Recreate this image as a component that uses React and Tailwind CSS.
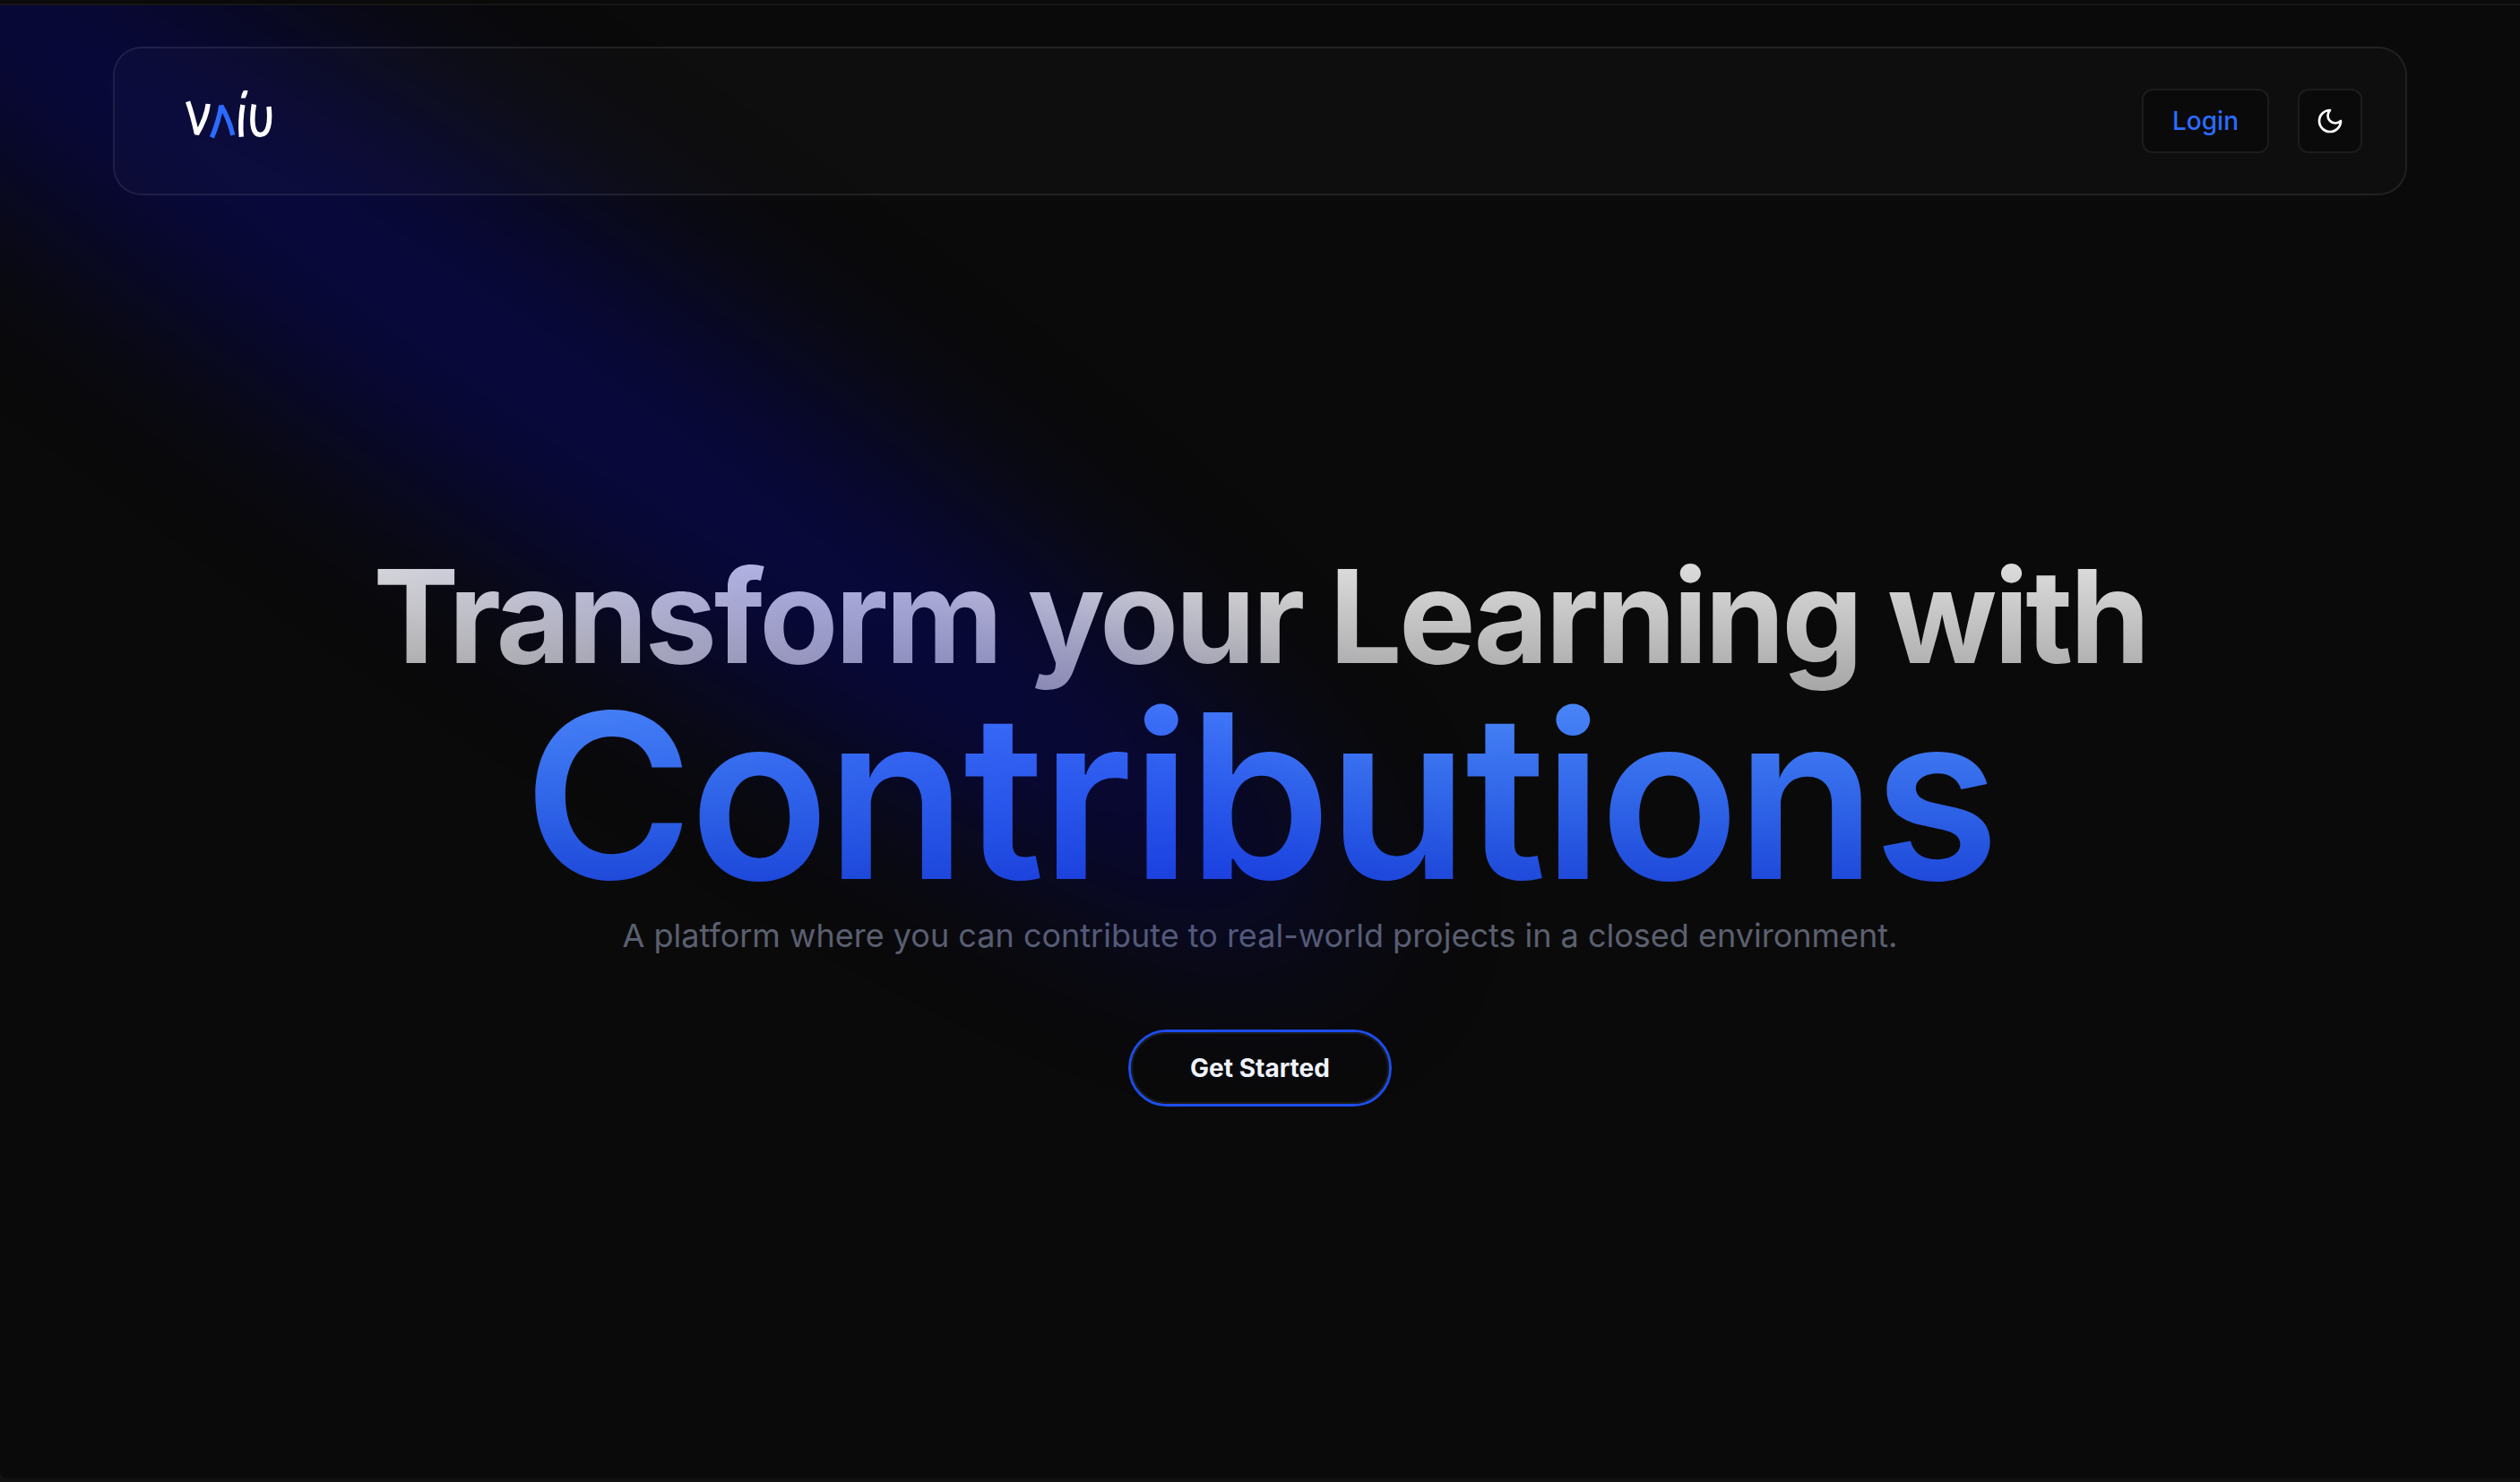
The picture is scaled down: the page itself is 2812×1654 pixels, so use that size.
function Logo() {
  return (
    <svg viewBox="0 0 98 55" className="h-[55px] w-[98px]" fill="none" strokeWidth="5.4" role="img" aria-label="vaiu">
      <path d="M3.6 13.4C8.2 26 11 38 13.6 49.6C20 39 24.8 28 26.2 16" stroke="#fff" strokeLinejoin="bevel" />
      <path d="M30.4 53.4C35.4 42 39 29 40.8 18C46.6 28 51.2 39 53.8 50.8" stroke="#2c6bff" strokeLinejoin="bevel" />
      <path d="M64.9 17C62.8 29 62.2 40 63.3 52.8" stroke="#fff" />
      <path d="M65.5 1.5Q68 0.4 70.6 1.2Q70 5 67.8 9.6H62.8Q63.4 5 65.5 1.5Z" fill="#fff" stroke="none" />
      <path d="M77.4 16.5C74.5 34 75 50.2 84.2 50.4C93.5 50.6 96 37 94 19" stroke="#fff" />
    </svg>
  );
}

function Spotlight() {
  return (
    <svg
      className="pointer-events-none absolute -left-[564px] -top-[454px] z-10 h-[1684px] w-[2244px]"
      viewBox="0 0 3787 2842"
      fill="none"
      aria-hidden="true"
    >
      <defs>
        <filter id="beam-blur" x="0" y="0" width="3787" height="2842" filterUnits="userSpaceOnUse" colorInterpolationFilters="sRGB">
          <feGaussianBlur stdDeviation="165" />
        </filter>
      </defs>
      <g filter="url(#beam-blur)">
        <ellipse
          cx="1924.71"
          cy="273.501"
          rx="1924.71"
          ry="290"
          transform="matrix(-0.822377 -0.568943 -0.568943 0.822377 3631.88 2291.09)"
          fill="blue"
          fillOpacity="0.21"
        />
      </g>
    </svg>
  );
}

function MoonIcon() {
  return (
    <svg
      viewBox="0 0 24 24"
      className="size-8"
      fill="none"
      stroke="#fff"
      strokeWidth="2"
      strokeLinecap="round"
      strokeLinejoin="round"
      aria-hidden="true"
    >
      <path d="M12 3a6 6 0 0 0 9 9 9 9 0 1 1-9-9Z" />
    </svg>
  );
}

export default function App() {
  return (
    <div className="flex min-h-screen flex-col bg-[#121212] pb-1 font-['Inter',sans-serif] text-white">
      <div className="h-1 bg-[#0a0a0a]" />
      <div className="relative flex flex-1 flex-col overflow-hidden rounded-bl-lg border-t-2 border-white/5 bg-[#0a0a0a]">
        <Spotlight />
        <header className="relative z-20 px-8 pt-[46px]">
          <nav className="mx-auto flex max-w-[2560px] items-center justify-between rounded-4xl border-2 border-white/8 bg-white/2 py-[45px] pl-[78px] pr-12 shadow-[0_16px_48px_rgba(255,255,255,0.01)]">
            <a href="#home" className="-mt-4">
              <Logo />
            </a>
            <div className="flex items-center gap-8">
              <button type="button" className="h-[72px] rounded-xl border-2 border-[#1c1c1c] bg-[#0a0a0a] px-8 text-[28px] leading-10 font-medium text-[#2c6bff]">
                Login
              </button>
              <button type="button" aria-label="Toggle theme" className="flex size-[72px] items-center justify-center rounded-xl border-2 border-[#1c1c1c] bg-[#0a0a0a]">
                <MoonIcon />
              </button>
            </div>
          </nav>
        </header>
        <main className="flex flex-1 flex-col items-center justify-center px-8 pb-9 text-center">
          <h1 className="flex flex-col items-center text-[144px] tracking-tight">
            <span className="bg-gradient-to-b from-[#e8e8e8] to-[#a4a4a4] bg-clip-text leading-[180px] font-bold text-transparent">
              Transform your Learning with
            </span>
            <span className="bg-gradient-to-b from-[#4a86f8] to-[#1d44d8] bg-clip-text text-[256px] leading-[220px] font-semibold text-transparent">
              Contributions
            </span>
          </h1>
          <p className="mt-4 text-[36px] leading-[60px] text-[#5b6070]">
            A platform where you can contribute to real-world projects in a closed environment.
          </p>
          <button type="button" className="mt-[75px] rounded-full border-3 border-[#1d4eed]">
            <span className="flex h-20 items-center rounded-full border-2 border-[#1c1c1c] px-16 text-[28px] font-bold text-[#f1f5fb]">
              Get Started
            </span>
          </button>
        </main>
      </div>
    </div>
  );
}
